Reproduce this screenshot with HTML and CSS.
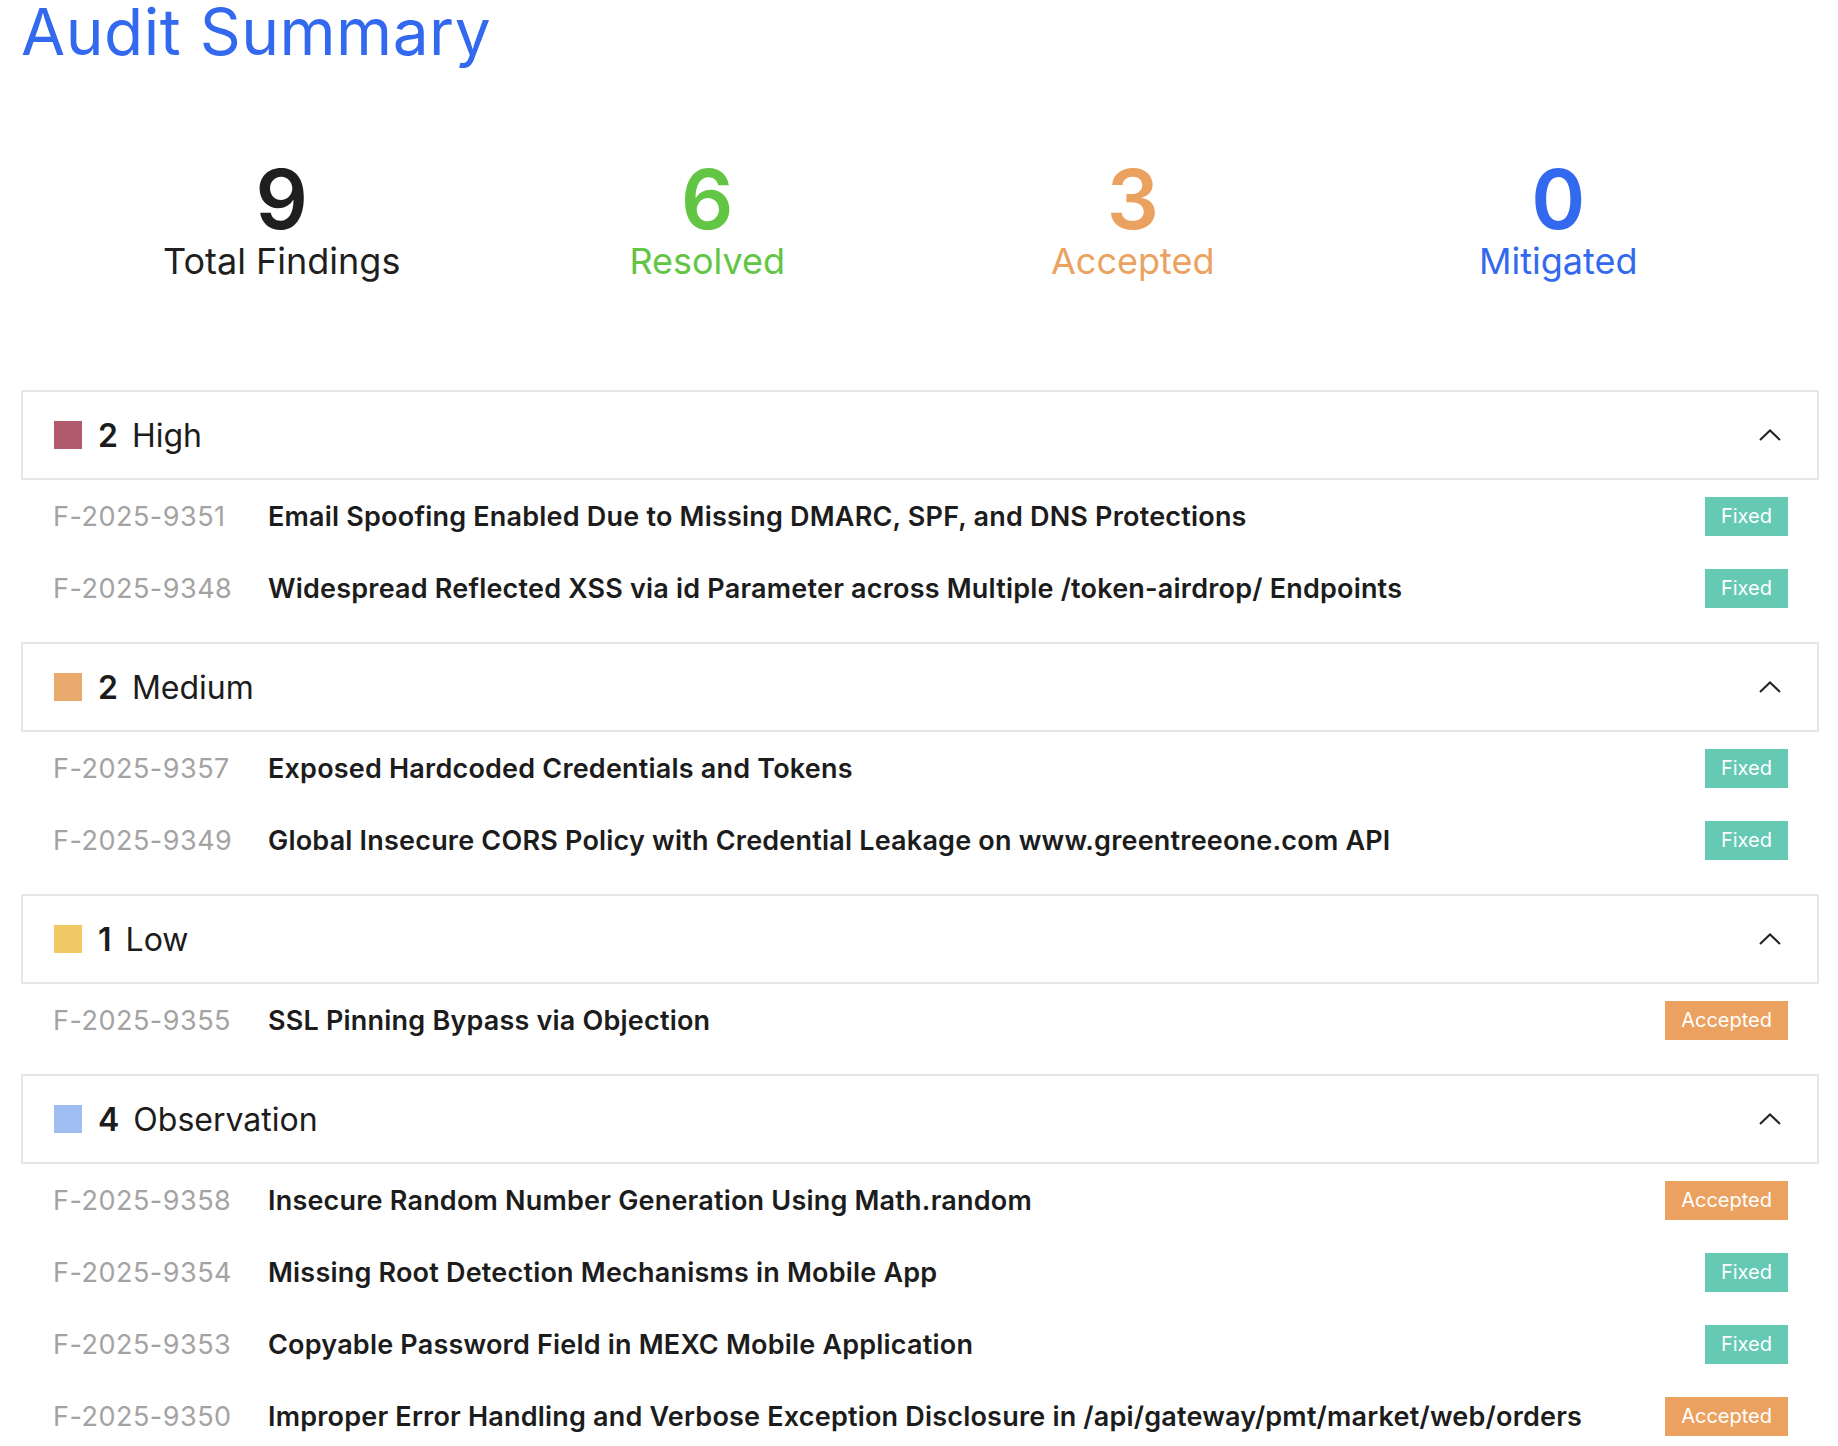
FILE: index.html
```html
<!DOCTYPE html>
<html lang="en">
<head>
<meta charset="utf-8">
<title>Audit Summary</title>
<link rel="stylesheet" href="styles.css">
</head>
<body>
<main class="page">
  <h1 class="title">Audit Summary</h1>

  <section class="stats">
    <div class="stat stat-total"><div class="stat-num">9</div><div class="stat-label">Total Findings</div></div>
    <div class="stat stat-resolved"><div class="stat-num">6</div><div class="stat-label">Resolved</div></div>
    <div class="stat stat-accepted"><div class="stat-num">3</div><div class="stat-label">Accepted</div></div>
    <div class="stat stat-mitigated"><div class="stat-num">0</div><div class="stat-label">Mitigated</div></div>
  </section>

  <section class="group">
    <div class="group-head">
      <span class="sev sev-high"></span><span class="group-count">2</span><span class="group-name">High</span>
      <svg class="chev" viewBox="0 0 22 12" width="22" height="12"><polyline points="1,11 11,1.5 21,11"/></svg>
    </div>
    <div class="row"><span class="fid">F-2025-9351</span><span class="ftitle">Email Spoofing Enabled Due to Missing DMARC, SPF, and DNS Protections</span><span class="badge badge-fixed">Fixed</span></div>
    <div class="row"><span class="fid">F-2025-9348</span><span class="ftitle">Widespread Reflected XSS via id Parameter across Multiple /token-airdrop/ Endpoints</span><span class="badge badge-fixed">Fixed</span></div>
  </section>

  <section class="group">
    <div class="group-head">
      <span class="sev sev-medium"></span><span class="group-count">2</span><span class="group-name">Medium</span>
      <svg class="chev" viewBox="0 0 22 12" width="22" height="12"><polyline points="1,11 11,1.5 21,11"/></svg>
    </div>
    <div class="row"><span class="fid">F-2025-9357</span><span class="ftitle">Exposed Hardcoded Credentials and Tokens</span><span class="badge badge-fixed">Fixed</span></div>
    <div class="row"><span class="fid">F-2025-9349</span><span class="ftitle">Global Insecure CORS Policy with Credential Leakage on www.greentreeone.com API</span><span class="badge badge-fixed">Fixed</span></div>
  </section>

  <section class="group">
    <div class="group-head">
      <span class="sev sev-low"></span><span class="group-count">1</span><span class="group-name">Low</span>
      <svg class="chev" viewBox="0 0 22 12" width="22" height="12"><polyline points="1,11 11,1.5 21,11"/></svg>
    </div>
    <div class="row"><span class="fid">F-2025-9355</span><span class="ftitle">SSL Pinning Bypass via Objection</span><span class="badge badge-accepted">Accepted</span></div>
  </section>

  <section class="group">
    <div class="group-head">
      <span class="sev sev-obs"></span><span class="group-count">4</span><span class="group-name">Observation</span>
      <svg class="chev" viewBox="0 0 22 12" width="22" height="12"><polyline points="1,11 11,1.5 21,11"/></svg>
    </div>
    <div class="row"><span class="fid">F-2025-9358</span><span class="ftitle">Insecure Random Number Generation Using Math.random</span><span class="badge badge-accepted">Accepted</span></div>
    <div class="row"><span class="fid">F-2025-9354</span><span class="ftitle">Missing Root Detection Mechanisms in Mobile App</span><span class="badge badge-fixed">Fixed</span></div>
    <div class="row"><span class="fid">F-2025-9353</span><span class="ftitle">Copyable Password Field in MEXC Mobile Application</span><span class="badge badge-fixed">Fixed</span></div>
    <div class="row"><span class="fid">F-2025-9350</span><span class="ftitle">Improper Error Handling and Verbose Exception Disclosure in /api/gateway/pmt/market/web/orders</span><span class="badge badge-accepted">Accepted</span></div>
  </section>
</main>
</body>
</html>
```

FILE: styles.css
```css
* { box-sizing: border-box; }

html, body {
  margin: 0;
  padding: 0;
  background: #ffffff;
  font-family: Inter, "Noto Sans", "Liberation Sans", sans-serif;
  color: #1c1c1c;
}

.page {
  padding: 0 19px 0 21px;
}

.title {
  margin: 0;
  font-size: 64px;
  line-height: 64px;
  font-weight: 400;
  color: #3369ef;
  letter-spacing: 0.5px;
}

.stats {
  display: grid;
  grid-template-columns: repeat(4, 1fr);
  margin: 95px 48px 0 48px;
  text-align: center;
}

.stat-num {
  font-size: 82px;
  line-height: 82px;
  font-weight: 600;
}

.stat-label {
  font-size: 36px;
  line-height: 36px;
  font-weight: 400;
  margin-top: 2px;
}

.stat-total { color: #1f1f1f; }
.stat-resolved { color: #62c544; }
.stat-accepted { color: #eba260; }
.stat-mitigated { color: #3369ef; }

.stats + .group { margin-top: 111px; }

.group { margin-bottom: 18px; }

.group-head {
  display: flex;
  align-items: center;
  height: 90px;
  border: 2px solid #e6e6e6;
  padding: 0 36px 0 31px;
}

.sev {
  width: 28px;
  height: 28px;
  flex: none;
}
.sev-high { background: #b05a6b; }
.sev-medium { background: #eaa96d; }
.sev-low { background: #f0c866; }
.sev-obs { background: #9fbdf2; }

.group-count {
  font-size: 32px;
  font-weight: 600;
  margin-left: 16px;
}

.group-name {
  font-size: 32px;
  font-weight: 400;
  margin-left: 14px;
  flex: 1;
}

.chev {
  fill: none;
  stroke: #222;
  stroke-width: 2;
}

.row {
  display: flex;
  align-items: center;
  height: 72px;
  padding: 0 31px 0 32px;
}

.fid {
  width: 215px;
  flex: none;
  font-size: 27px;
  letter-spacing: 0.5px;
  color: #a3a3a3;
}

.ftitle {
  flex: 1;
  font-size: 27px;
  font-weight: 600;
  letter-spacing: 0.2px;
  color: #1c1c1c;
}

.badge {
  flex: none;
  height: 39px;
  line-height: 39px;
  padding: 0 16px;
  font-size: 20px;
  color: #ffffff;
}
.badge-fixed { background: #66c9b4; }
.badge-accepted { background: #eba260; }
```
